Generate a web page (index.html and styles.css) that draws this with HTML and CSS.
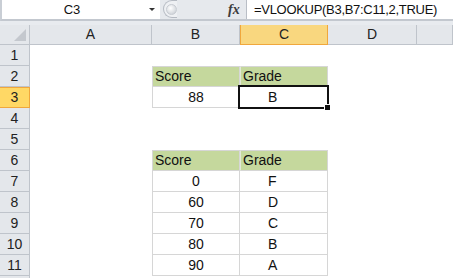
FILE: index.html
```html
<!DOCTYPE html>
<html lang="en">
<head>
    <meta charset="UTF-8">
    <meta name="viewport" content="width=device-width, initial-scale=1.0">
    <title>VLOOKUP grade example</title>
    <link rel="stylesheet" href="styles.css">
</head>
<body>

    <div class="formula-bar">
        <div class="name-box">
            <span class="cell-ref">C3</span>
            <span class="dropdown"></span>
        </div>
        <div class="fx-area">
            <span class="grip"><span class="dimple"></span></span>
            <span class="fx">fx</span>
        </div>
        <div class="formula">=VLOOKUP(B3,B7:C11,2,TRUE)</div>
    </div>
    <div class="bar-gap"></div>

    <div class="sheet">
        <!-- column headers -->
        <div class="corner"><span class="corner-mark"></span></div>
        <div class="col-head">A</div>
        <div class="col-head">B</div>
        <div class="col-head active">C</div>
        <div class="col-head">D</div>
        <div class="col-head"></div>

        <div class="row-head">1</div>
        <div class="cell"></div><div class="cell"></div><div class="cell"></div><div class="cell"></div><div class="cell"></div>

        <div class="row-head">2</div>
        <div class="cell"></div>
        <div class="cell tbl head first top">Score</div>
        <div class="cell tbl head top">Grade</div>
        <div class="cell"></div><div class="cell"></div>

        <div class="row-head active">3</div>
        <div class="cell"></div>
        <div class="cell tbl first num">88</div>
        <div class="cell tbl grade selected">B<span class="selection"><span class="fill-handle"></span></span></div>
        <div class="cell"></div><div class="cell"></div>

        <div class="row-head">4</div>
        <div class="cell"></div><div class="cell"></div><div class="cell"></div><div class="cell"></div><div class="cell"></div>

        <div class="row-head">5</div>
        <div class="cell"></div><div class="cell"></div><div class="cell"></div><div class="cell"></div><div class="cell"></div>

        <div class="row-head">6</div>
        <div class="cell"></div>
        <div class="cell tbl head first top">Score</div>
        <div class="cell tbl head top">Grade</div>
        <div class="cell"></div><div class="cell"></div>

        <div class="row-head">7</div>
        <div class="cell"></div>
        <div class="cell tbl first num">0</div>
        <div class="cell tbl grade">F</div>
        <div class="cell"></div><div class="cell"></div>

        <div class="row-head">8</div>
        <div class="cell"></div>
        <div class="cell tbl first num">60</div>
        <div class="cell tbl grade">D</div>
        <div class="cell"></div><div class="cell"></div>

        <div class="row-head">9</div>
        <div class="cell"></div>
        <div class="cell tbl first num">70</div>
        <div class="cell tbl grade">C</div>
        <div class="cell"></div><div class="cell"></div>

        <div class="row-head">10</div>
        <div class="cell"></div>
        <div class="cell tbl first num">80</div>
        <div class="cell tbl grade">B</div>
        <div class="cell"></div><div class="cell"></div>

        <div class="row-head">11</div>
        <div class="cell"></div>
        <div class="cell tbl first num">90</div>
        <div class="cell tbl grade">A</div>
        <div class="cell"></div><div class="cell"></div>

        <!-- row 12 is only a sliver at the bottom edge -->
        <div class="row-head"></div>
        <div class="cell"></div><div class="cell"></div><div class="cell"></div><div class="cell"></div><div class="cell"></div>
    </div>

</body>
</html>
```

FILE: styles.css
```css
body {
    margin: 0;
    font-family: "Liberation Sans", Arial, sans-serif;
    font-size: 14px;
    color: #111;
    background: #fff;
    overflow: hidden;
}

/* formula bar */
.formula-bar {
    display: flex;
    height: 21px;
    box-sizing: border-box;
    border-bottom: 2px solid #c3c8cf;
    border-left: 2px solid #c9ced5;
}
.name-box {
    display: flex;
    align-items: center;
    width: 158px;
    background: #fff;
}
.cell-ref {
    width: 140px;
    text-align: center;
    font-size: 13px;
    line-height: 19px;
}
.dropdown {
    width: 0;
    height: 0;
    margin-left: 7px;
    border-left: 3px solid transparent;
    border-right: 3px solid transparent;
    border-top: 3px solid #333;
}
.fx-area {
    display: flex;
    align-items: flex-start;
    width: 86px;
    background: #e6e9ed;
    border-right: 1px solid #b9bec6;
}
.grip {
    display: flex;
    align-items: center;
    width: 14px;
    height: 18px;
    margin-left: 3px;
    box-sizing: border-box;
    border: 1px solid #b5bac2;
    border-right: none;
    border-radius: 10px 0 0 10px;
    background: #eef0f3;
}
.dimple {
    width: 9px;
    height: 9px;
    margin-left: 2px;
    border-radius: 50%;
    background: radial-gradient(circle at 40% 35%, #fff, #c3c8cf);
    border: 1px solid #c7cbd1;
}
.fx {
    margin-left: 51px;
    font-family: "Liberation Serif", serif;
    font-style: italic;
    font-weight: bold;
    font-size: 14px;
    line-height: 19px;
    color: #3c3c3c;
}
.formula {
    flex: 1;
    padding-left: 7px;
    background: #fff;
    font-size: 13px;
    letter-spacing: -0.3px;
    line-height: 19px;
}
.bar-gap {
    height: 4px;
    background: #e8ebef;
}

/* sheet grid */
.sheet {
    display: grid;
    grid-template-columns: 30px 122px 88px 88px 89px 1fr;
    grid-template-rows: 20px repeat(12, 21px);
}
.corner, .col-head, .row-head {
    box-sizing: border-box;
    background: #e4e7eb;
    border-right: 1px solid #bfc4cb;
    border-bottom: 1px solid #bfc4cb;
    color: #222;
    text-align: center;
    line-height: 19px;
}
.corner {
    position: relative;
}
.corner-mark {
    position: absolute;
    right: 3px;
    bottom: 3px;
    width: 0;
    height: 0;
    border-left: 12px solid transparent;
    border-bottom: 12px solid #c4c8ce;
}
.row-head {
    line-height: 20px;
}
.col-head.active, .row-head.active {
    background: #f9d77f;
    border-right-color: #f0a73c;
    border-bottom-color: #f0a73c;
}
.row-head.active {
    background: #ffd865;
    border-top: 1px solid #f0a73c;
    line-height: 19px;
}
.col-head.active {
    border-left: 1px solid #f0a73c;
}

.cell {
    box-sizing: border-box;
    line-height: 20px;
    white-space: nowrap;
}
.tbl {
    border-right: 1px solid #d6d6d6;
    border-bottom: 1px solid #d6d6d6;
}
.tbl.first {
    border-left: 1px solid #d6d6d6;
}
.tbl.top {
    border-top: 1px solid #d6d6d6;
    line-height: 19px;
}
.tbl.head {
    background: #c5d89d;
    padding-left: 2px;
}
.tbl.head + .tbl.head {
    border-left: 1px solid #e2e8d6;
}
.num {
    text-align: center;
}
.grade {
    padding-left: 28px;
}

/* active cell */
.selected {
    position: relative;
}
.selection {
    position: absolute;
    left: -2px;
    top: -2px;
    right: -2px;
    bottom: -2px;
    border: 2px solid #111;
}
.fill-handle {
    position: absolute;
    right: -4px;
    bottom: -4px;
    width: 5px;
    height: 5px;
    background: #111;
    border: 1px solid #fff;
}
```
